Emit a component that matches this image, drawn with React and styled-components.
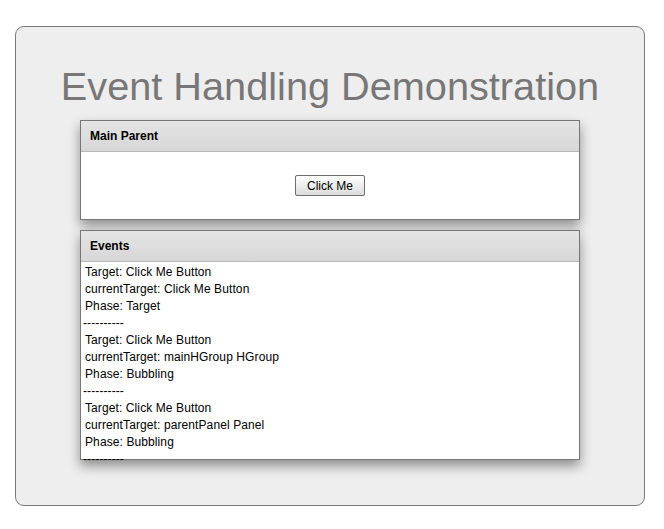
import React from "react";
import styled, { createGlobalStyle } from "styled-components";

const Global = createGlobalStyle`
  html, body { margin: 0; padding: 0; background: #ffffff; }
  body { font-family: "Liberation Sans", Arial, sans-serif; }
`;

const Frame = styled.div`
  margin: 26px 0 0 15px;
  width: 630px;
  height: 480px;
  box-sizing: border-box;
  border: 1px solid #7a7a7a;
  border-radius: 9px;
  background: #eeeeee;
  display: flex;
  flex-direction: column;
  align-items: center;
  padding-top: 37px;
`;

const Title = styled.h1`
  margin: 0 0 12px;
  font-family: "Liberation Sans", Arial, sans-serif;
  font-weight: normal;
  font-size: 39.7px;
  line-height: 44px;
  color: #777777;
  white-space: nowrap;
`;

const Panel = styled.section`
  width: 500px;
  box-sizing: border-box;
  border: 1px solid #777777;
  background: #ffffff;
  box-shadow: 0 6px 11px rgba(0, 0, 0, 0.4);
  margin-bottom: ${(p) => p.$gap || 0}px;
  display: flex;
  flex-direction: column;
`;

const Header = styled.header`
  height: 30px;
  border-bottom: 1px solid #b9b9b9;
  background: linear-gradient(#e4e4e4, #d7d7d7);
  display: flex;
  align-items: center;
  padding-left: 9px;
  font-size: 12px;
  font-weight: bold;
  color: #000;
`;

const Body = styled.div`
  height: ${(p) => p.$h}px;
  display: flex;
  align-items: center;
  justify-content: center;
`;

const Button = styled.button`
  width: 70px;
  height: 21px;
  padding: 0;
  border: 1px solid #6d6d6d;
  border-radius: 2px;
  background: linear-gradient(#ffffff, #dcdcdc);
  font-family: "Liberation Sans", Arial, sans-serif;
  font-size: 12px;
  color: #000;
  cursor: pointer;
`;

const Log = styled.div`
  height: 197px;
  max-height: 197px;
  padding: 2px 0 0 2px;
  box-sizing: border-box;
  font-size: 12px;
  line-height: 17px;
  letter-spacing: 0.1px;
  color: #000;
  position: relative;
`;

const Line = styled.div`
  padding-left: ${(p) => (p.$sep ? 0 : 2)}px;
  white-space: nowrap;
  height: 17px;
  overflow: ${(p) => (p.$last ? "hidden" : "visible")};
  ${(p) => (p.$last ? "height: 11px;" : "")}
`;

const events = [
  ["Click Me Button", "Click Me Button", "Target"],
  ["Click Me Button", "mainHGroup HGroup", "Bubbling"],
  ["Click Me Button", "parentPanel Panel", "Bubbling"],
];

export default function App() {
  return (
    <>
      <Global />
      <Frame>
        <Title>Event Handling Demonstration</Title>
        <Panel $gap={10}>
          <Header>Main Parent</Header>
          <Body $h={67}>
            <Button>Click Me</Button>
          </Body>
        </Panel>
        <Panel>
          <Header>Events</Header>
          <Log>
            {events.map(([t, c, ph], i) => (
              <React.Fragment key={i}>
                <Line>Target: {t}</Line>
                <Line>currentTarget: {c}</Line>
                <Line>Phase: {ph}</Line>
                <Line $sep $last={i === events.length - 1}>----------</Line>
              </React.Fragment>
            ))}
          </Log>
        </Panel>
      </Frame>
    </>
  );
}
